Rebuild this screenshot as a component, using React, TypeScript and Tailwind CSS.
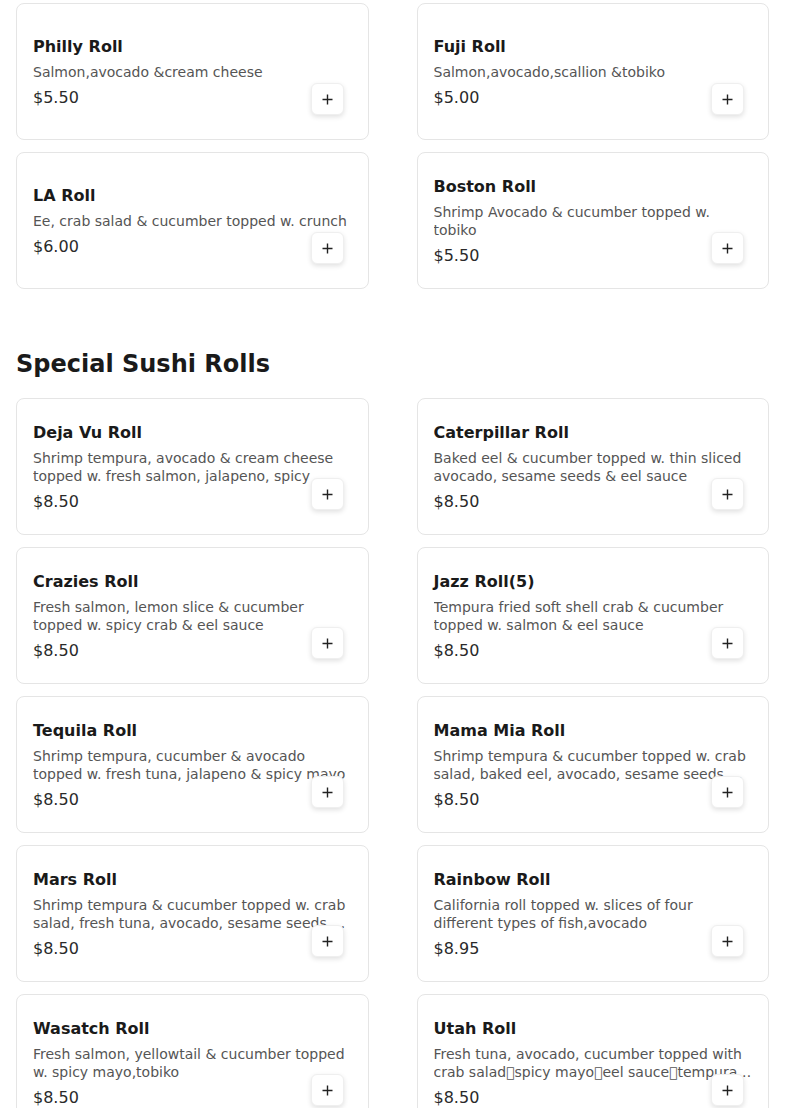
import React from "react";

type Item = { name: string; desc: string; price: string };

const X = "\uE000";

const top: Item[] = [
  { name: "Philly Roll", desc: "Salmon,avocado &cream cheese", price: "$5.50" },
  { name: "Fuji Roll", desc: "Salmon,avocado,scallion &tobiko", price: "$5.00" },
  { name: "LA Roll", desc: "Ee, crab salad & cucumber topped w. crunch", price: "$6.00" },
  { name: "Boston Roll", desc: "Shrimp Avocado & cucumber topped w. tobiko", price: "$5.50" },
];

const special: Item[] = [
  { name: "Deja Vu Roll", desc: "Shrimp tempura, avocado & cream cheese topped w. fresh salmon, jalapeno, spicy", price: "$8.50" },
  { name: "Caterpillar Roll", desc: "Baked eel & cucumber topped w. thin sliced avocado, sesame seeds & eel sauce", price: "$8.50" },
  { name: "Crazies Roll", desc: "Fresh salmon, lemon slice & cucumber topped w. spicy crab & eel sauce", price: "$8.50" },
  { name: "Jazz Roll(5)", desc: "Tempura fried soft shell crab & cucumber topped w. salmon & eel sauce", price: "$8.50" },
  { name: "Tequila Roll", desc: "Shrimp tempura, cucumber & avocado topped w. fresh tuna, jalapeno & spicy mayo", price: "$8.50" },
  { name: "Mama Mia Roll", desc: "Shrimp tempura & cucumber topped w. crab salad, baked eel, avocado, sesame seeds & eel sauce", price: "$8.50" },
  { name: "Mars Roll", desc: "Shrimp tempura & cucumber topped w. crab salad, fresh tuna, avocado, sesame seeds & spicy mayo", price: "$8.50" },
  { name: "Rainbow Roll", desc: "California roll topped w. slices of four different types of fish,avocado", price: "$8.95" },
  { name: "Wasatch Roll", desc: "Fresh salmon, yellowtail & cucumber topped w. spicy mayo,tobiko", price: "$8.50" },
  { name: "Utah Roll", desc: `Fresh tuna, avocado, cucumber topped with crab salad${X}spicy mayo${X}eel sauce${X}tempura flakes`, price: "$8.50" },
];

function Card({ item }: { item: Item }) {
  return (
    <div className="relative flex h-[137px] flex-col justify-center rounded-lg border border-[#e5e5e5] bg-white px-4 pt-[2px]">
      <div className="text-base font-bold leading-6 text-[#1a1a1a]">{item.name}</div>
      <div className="mt-[5px] line-clamp-2 text-sm leading-[17.5px] text-[#555555]">{item.desc}</div>
      <div className="mt-[4.5px] text-base leading-6 text-[#2a2a2a]">{item.price}</div>
      <button className="absolute bottom-6 right-6 flex h-8 w-[33px] items-center justify-center rounded-md border border-[#efefef] bg-white shadow-[0_2px_5px_rgba(0,0,0,0.12)]">
        <svg width="11" height="11" viewBox="0 0 11 11" fill="none" stroke="#222" strokeWidth="1.4">
          <path d="M5.5 0.5v10M0.5 5.5h10" />
        </svg>
      </button>
    </div>
  );
}

export default function App() {
  return (
    <div className="min-h-screen bg-white px-4 pt-[3px]" style={{ fontFamily: '"DejaVu Sans", sans-serif' }}>
      <div className="grid grid-cols-2 gap-x-12 gap-y-3">
        {top.map((it) => (
          <Card key={it.name} item={it} />
        ))}
      </div>
      <h2 className="mb-[18px] mt-[59px] text-2xl font-bold leading-8 text-[#1a1a1a]">Special Sushi Rolls</h2>
      <div className="grid grid-cols-2 gap-x-12 gap-y-3">
        {special.map((it) => (
          <Card key={it.name} item={it} />
        ))}
      </div>
    </div>
  );
}
